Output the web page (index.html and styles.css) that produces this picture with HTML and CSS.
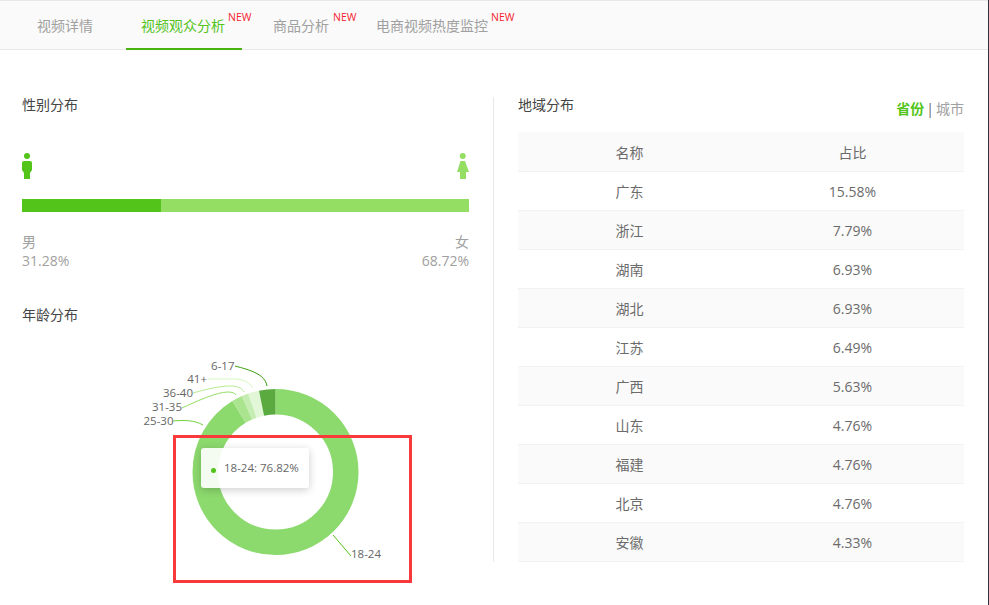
FILE: index.html
```html
<!DOCTYPE html>
<html lang="zh-CN">
<head>
<meta charset="utf-8">
<title>视频观众分析</title>
<link rel="stylesheet" href="styles.css">
</head>
<body>
<nav class="tabs">
  <a class="tab tab-first">视频详情</a>
  <a class="tab tab-active">视频观众分析<sup class="new">NEW</sup></a>
  <a class="tab tab-goods">商品分析<sup class="new">NEW</sup></a>
  <a class="tab tab-monitor">电商视频热度监控<sup class="new">NEW</sup></a>
</nav>
<main class="content">
  <section class="left">
    <h2 class="title">性别分布</h2>
    <div class="icons">
      <svg class="person" width="11" height="26" viewBox="0 0 11 26"><circle cx="5" cy="3" r="3" fill="#52c41a"/><path d="M0 10Q0 8 2 8H8Q10 8 10 10V17L8 20V26H2V20L0 17Z" fill="#52c41a"/></svg>
      <svg class="person" width="13" height="26" viewBox="0 0 13 26"><circle cx="6.7" cy="3" r="3" fill="#95de64"/><path d="M4.5 8H9L13 19H10V26H4V19H1Z" fill="#95de64"/></svg>
    </div>
    <div class="bar"><div class="bar-male"></div></div>
    <div class="legend">
      <div><div>男</div><div>31.28%</div></div>
      <div class="legend-right"><div>女</div><div>68.72%</div></div>
    </div>
    <h2 class="title title-age">年龄分布</h2>
    <div class="chart">
      <svg class="donut" width="447" height="250" viewBox="0 0 447 250">
        <g transform="translate(253.5 131) rotate(-90)" fill="none" stroke-width="25.5">
          <circle r="70.25" pathLength="360" stroke="#8cd96e" stroke-dasharray="328.7 360"/>
          <circle r="70.25" pathLength="360" stroke="#abe48f" stroke-dasharray="7.4 360" stroke-dashoffset="-328.7"/>
          <circle r="70.25" pathLength="360" stroke="#c5edb2" stroke-dasharray="4.7 360" stroke-dashoffset="-336.1"/>
          <circle r="70.25" pathLength="360" stroke="#e2f6d8" stroke-dasharray="7.7 360" stroke-dashoffset="-340.8"/>
          <circle r="70.25" pathLength="360" stroke="#5aaa3f" stroke-dasharray="11.5 360" stroke-dashoffset="-348.5"/>
        </g>
        <g fill="none" stroke-width="1">
          <path d="M213 25C228 29 243 33 245 45" stroke="#389e0d"/>
          <path d="M186 38H212C222 38 228 42 231 47" stroke="#d9f7be"/>
          <path d="M171 52C185 48 198 45 208 45C216 45 220 47 222 51" stroke="#b7eb8f"/>
          <path d="M160 67C175 60 195 51 206 51C210 51 213 52 214 54" stroke="#95de64"/>
          <path d="M151 80C162 79 172 79 181 84" stroke="#73d13d"/>
          <path d="M311 194L329 215" stroke="#52c41a"/>
        </g>
        <g class="label">
          <text x="212.5" y="28.5" text-anchor="end">6-17</text>
          <text x="185" y="42" text-anchor="end">41+</text>
          <text x="171" y="56" text-anchor="end">36-40</text>
          <text x="160" y="70" text-anchor="end">31-35</text>
          <text x="151.5" y="84" text-anchor="end">25-30</text>
          <text x="329" y="217">18-24</text>
        </g>
      </svg>
      <div class="tooltip"><i class="dot"></i>18-24: 76.82%</div>
    </div>
  </section>
  <section class="right">
    <div class="right-head">
      <h2 class="title">地域分布</h2>
      <div class="switch"><b class="on">省份</b><span class="sep">|</span><span>城市</span></div>
    </div>
    <div class="table">
      <div class="row head"><span>名称</span><span>占比</span></div>
      <div class="row"><span>广东</span><span>15.58%</span></div>
      <div class="row alt"><span>浙江</span><span>7.79%</span></div>
      <div class="row"><span>湖南</span><span>6.93%</span></div>
      <div class="row alt"><span>湖北</span><span>6.93%</span></div>
      <div class="row"><span>江苏</span><span>6.49%</span></div>
      <div class="row alt"><span>广西</span><span>5.63%</span></div>
      <div class="row"><span>山东</span><span>4.76%</span></div>
      <div class="row alt"><span>福建</span><span>4.76%</span></div>
      <div class="row"><span>北京</span><span>4.76%</span></div>
      <div class="row alt"><span>安徽</span><span>4.33%</span></div>
    </div>
  </section>
</main>
<div class="highlight"></div>
</body>
</html>
```
FILE: styles.css
```css
* { box-sizing: border-box; }
html, body { margin: 0; height: 605px; overflow: hidden; }
body {
  position: relative;
  background: #fff;
  border-right: 1px solid #2e3040;
  font-family: "Open Sans", "Noto Sans CJK SC", sans-serif;
  font-size: 14px;
  color: #6b6b6b;
}
.tabs {
  display: flex;
  height: 50px;
  padding-left: 21px;
  background: #fafafa;
  border-top: 1px solid #e8e8e8;
  border-bottom: 1px solid #e8e8e8;
}
.tab {
  position: relative;
  display: block;
  height: 49px;
  line-height: 49px;
  color: #a0a0a0;
  white-space: nowrap;
}
.tab-first { padding: 0 16px; margin-right: 17px; }
.tab-active { color: #52c41a; border-bottom: 2px solid #4ab40f; padding: 0 17px 0 15px; }
.tab-goods { padding: 0 16px; margin-left: 15px; }
.tab-monitor { padding: 0 16px; margin-left: 15px; }
.new {
  position: absolute;
  top: 10px;
  font-size: 10.5px;
  line-height: 12px;
  color: #f5222d;
}
.tab-active .new { left: 102px; }
.tab-goods .new { left: 76px; }
.tab-monitor .new { left: 131px; }
.content { display: flex; padding: 0 24px 0 22px; }
.left { width: 447px; padding-top: 45px; }
.title { margin: 0; font-size: 14px; font-weight: 400; line-height: 20px; color: #444; }
.icons { display: flex; justify-content: space-between; margin-top: 38px; height: 26px; }
.person { display: block; }
.bar { height: 13px; margin-top: 20px; background: #95de64; }
.bar-male { width: 139px; height: 100%; background: #52c41a; }
.legend { display: flex; justify-content: space-between; margin-top: 20px; line-height: 19px; color: #a0a0a0; }
.legend-right { text-align: right; }
.title-age { margin-top: 35px; }
.chart { position: relative; height: 250px; margin-top: 16px; }
.donut { display: block; }
.label { font-size: 11.5px; fill: #666; }
.tooltip {
  position: absolute;
  left: 179px;
  top: 107px;
  width: 108px;
  height: 40px;
  padding-left: 23px;
  line-height: 40px;
  font-size: 11.5px;
  color: #666;
  background: rgba(255,255,255,.9);
  border-radius: 3px;
  box-shadow: 0 2px 8px rgba(0,0,0,.2);
}
.dot { position: absolute; left: 10px; top: 20px; width: 5px; height: 5px; border-radius: 50%; background: #52c41a; }
.right {
  width: 471px;
  margin-left: 24px;
  margin-top: 47px;
  height: 465px;
  padding-left: 24px;
  border-left: 1px solid #e8e8e8;
}
.right-head { display: flex; justify-content: space-between; align-items: flex-start; height: 36px; margin-top: -1px; }
.right-head .title { margin-top: -1px; }
.switch { display: flex; align-items: center; height: 20px; margin-top: 2px; color: #a0a0a0; }
.on { color: #52c41a; font-weight: 700; }
.sep { margin: 0 2px; color: #666; }
.table { width: 446px; }
.row { display: grid; grid-template-columns: 223px 223px; height: 39px; align-items: center; text-align: center; border-bottom: 1px solid #f2f2f2; }
.head, .alt { background: #fafafa; }
.head { height: 40px; }
.highlight {
  position: absolute;
  left: 173px;
  top: 435px;
  width: 239px;
  height: 148px;
  border: 3px solid #f83a3a;
  pointer-events: none;
}
```
